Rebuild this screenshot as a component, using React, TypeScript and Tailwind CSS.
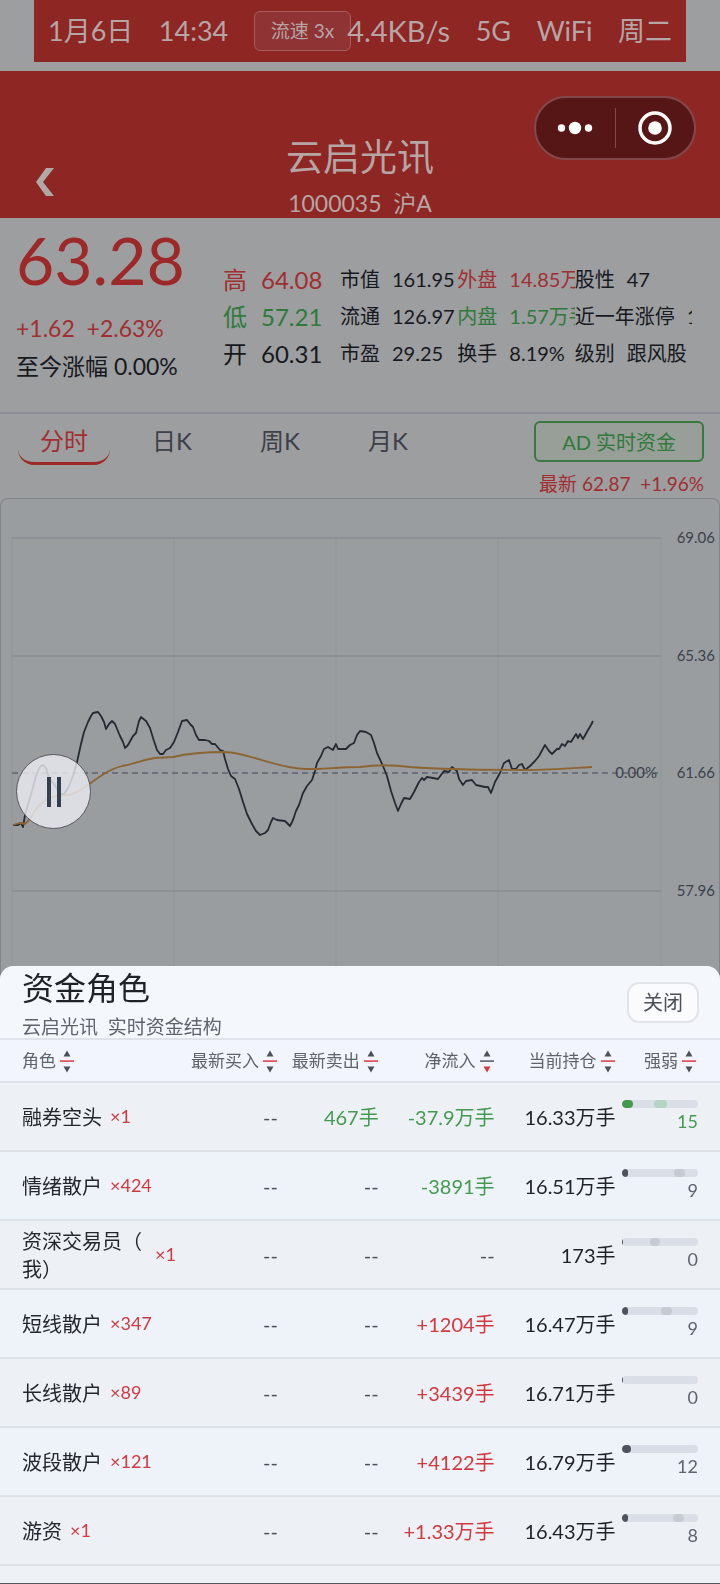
import { useState } from "react";

const FONT = "font-[Lato,'Noto_Sans_CJK_SC',sans-serif]";

const QUOTE = [
  { label: "高", value: "64.08", cls: "text-[#a22e31]" },
  { label: "低", value: "57.21", cls: "text-[#2f7a3a]" },
  { label: "开", value: "60.31", cls: "text-[#17191e]" },
];

const STATS = [
  [
    { label: "市值", value: "161.95", cls: "" },
    { label: "流通", value: "126.97", cls: "" },
    { label: "市盈", value: "29.25", cls: "" },
  ],
  [
    { label: "外盘", value: "14.85万手", cls: "text-[#a22e31]" },
    { label: "内盘", value: "1.57万手", cls: "text-[#2f7a3a]" },
    { label: "换手", value: "8.19%", cls: "" },
  ],
  [
    { label: "股性", value: "47", cls: "" },
    { label: "近一年涨停", value: "1", cls: "" },
    { label: "级别", value: "跟风股", cls: "" },
  ],
];

const TABS = ["分时", "日K", "周K", "月K"];

const COLUMNS = [
  { title: "角色", width: "w-[25%]" },
  { title: "最新买入", width: "w-[13.6%]" },
  { title: "最新卖出", width: "w-[14%]" },
  { title: "净流入", width: "w-[16.1%]" },
  { title: "当前持仓", width: "w-[16.8%]" },
  { title: "强弱", width: "w-[14.5%]" },
];

type Role = {
  name: string;
  count: number;
  buy: string;
  sell: string;
  net: string;
  hold: string;
  power: number;
  ghost?: [number, number];
};

const ROLES: Role[] = [
  { name: "融券空头", count: 1, buy: "--", sell: "467手", net: "-37.9万手", hold: "16.33万手", power: 15, ghost: [43, 17] },
  { name: "情绪散户", count: 424, buy: "--", sell: "--", net: "-3891手", hold: "16.51万手", power: 9, ghost: [68, 15] },
  { name: "资深交易员（我）", count: 1, buy: "--", sell: "--", net: "--", hold: "173手", power: 0, ghost: [37, 13] },
  { name: "短线散户", count: 347, buy: "--", sell: "--", net: "+1204手", hold: "16.47万手", power: 9, ghost: [51, 15] },
  { name: "长线散户", count: 89, buy: "--", sell: "--", net: "+3439手", hold: "16.71万手", power: 0 },
  { name: "波段散户", count: 121, buy: "--", sell: "--", net: "+4122手", hold: "16.79万手", power: 12 },
  { name: "游资", count: 1, buy: "--", sell: "--", net: "+1.33万手", hold: "16.43万手", power: 8, ghost: [67, 15] },
];

const PRICE_LINE =
  "M13 327 L18 327 L21 325 L23 329 L25 317 L30 300 L36 278 L40 269 L43 267 L46 270 L49 280 L54 286 L58 292 L61 296 L64 296 L68 290 L73 278 L77 264 L81 246 L84 234 L88 224 L91 218 L93 215 L98 214 L101 218 L104 224 L106 231 L109 226 L112 223 L115 226 L120 238 L123 244 L125 250 L128 247 L133 238 L136 235 L139 223 L141 219 L146 223 L150 230 L153 240 L157 252 L160 256 L163 256 L166 252 L170 250 L174 244 L178 234 L182 223 L187 222 L190 226 L193 229 L196 237 L199 242 L205 242 L209 243 L212 246 L215 246 L220 252 L223 253 L225 261 L228 271 L231 278 L235 281 L239 291 L243 304 L247 316 L252 326 L256 333 L260 337 L265 335 L268 332 L271 324 L273 320 L277 322 L285 323 L290 328 L293 322 L296 313 L299 307 L303 295 L307 288 L312 282 L315 273 L317 265 L321 258 L324 251 L328 249 L333 252 L336 246 L338 251 L346 251 L350 247 L354 245 L357 237 L360 233 L366 234 L371 237 L374 245 L377 255 L383 268 L387 278 L391 293 L395 305 L398 313 L401 306 L404 300 L410 301 L414 294 L419 284 L422 280 L424 282 L427 279 L433 280 L438 281 L444 273 L449 274 L452 269 L457 273 L459 281 L463 287 L466 283 L472 282 L476 287 L485 289 L488 289 L491 295 L495 284 L500 275 L504 265 L509 262 L512 271 L516 271 L519 267 L522 266 L525 272 L530 268 L535 263 L539 258 L545 247 L549 253 L552 256 L557 251 L559 251 L562 246 L565 248 L568 243 L571 244 L576 236 L578 240 L580 236 L583 241 L588 232 L591 227 L593 223";

const AVG_LINE =
  "M13 327 L20 325 L25 326 L30 321 Q38 306 46 302 C56 296 62 298 70 297 C80 293 86 289 92 284 C102 277 110 271 122 268 C135 266 145 261 155 260 L173 259 C190 255 212 254 225 254 C250 255 275 270 305 271 L318 271 C335 270 348 269 360 269 C380 266 395 267 410 269 C440 271 480 272 525 272 C550 272 575 270 592 269";

const GRID_Y = [
  { y: 40, label: "69.06" },
  { y: 158, label: "65.36" },
  { y: 275, label: "61.66" },
  { y: 393, label: "57.96" },
];

function StatusBar() {
  return (
    <div className="mx-[34px] flex h-[62px] items-center justify-between bg-[#8e2624] px-[14px] text-[27px] whitespace-nowrap text-[#b5a5a5]">
      <span>1月6日</span>
      <span>14:34</span>
      <div className="flex items-center">
        <button
          type="button"
          className="h-10 rounded-md border border-[#a65c5c] bg-[#8f3334] px-4 text-[19px]"
        >
          流速 3x
        </button>
        <span className="-ml-1 text-[29px]">4.4KB/s</span>
      </div>
      <span>5G</span>
      <span>WiFi</span>
      <span>周二</span>
    </div>
  );
}

function Header() {
  return (
    <header className="relative mt-[9px] flex h-[147px] flex-col items-center justify-end bg-[#8e2624] text-[#b5a5a5]">
      <button type="button" aria-label="返回" className="absolute bottom-[18px] left-8 p-1">
        <svg width="18" height="28" viewBox="0 0 18 28" fill="#b0a8a6">
          <path d="M10 0 H18 L7 14 L18 28 H10 L0 14 Z" />
        </svg>
      </button>
      <h1 className="text-[37px] leading-[62px]">云启光讯</h1>
      <p className="text-[23px] leading-[30px] whitespace-pre">1000035  沪A</p>
      <div className="absolute top-[25px] right-6 flex h-16 w-[162px] items-center rounded-full border-2 border-[#83494a] bg-[#561616]">
        <button type="button" aria-label="更多" className="flex flex-1 items-center justify-center">
          <svg width="36" height="14" viewBox="0 0 36 14" fill="#fff">
            <circle cx="4.500" cy="7" r="3.700" />
            <circle cx="18" cy="7" r="6.200" />
            <circle cx="31.500" cy="7" r="3.700" />
          </svg>
        </button>
        <span className="h-10 w-px bg-[#83494a]" />
        <button type="button" aria-label="关闭小程序" className="flex flex-1 items-center justify-center">
          <svg width="34" height="34" viewBox="0 0 34 34">
            <circle cx="17" cy="17" r="15" fill="none" stroke="#fff" strokeWidth="3.500" />
            <circle cx="17" cy="17" r="6.800" fill="#fff" />
          </svg>
        </button>
      </div>
    </header>
  );
}

function QuotePanel() {
  return (
    <section className="flex h-[196px] border-b-2 border-[#8c8e95] pr-7 pl-4 whitespace-nowrap text-[#17191e]">
      <div className="w-[207px] shrink-0">
        <div className="pt-1 text-[66px] leading-[76px] text-[#9c2827]">63.28</div>
        <div className="mt-[11px] text-[23px] leading-[38px] whitespace-pre text-[#a22e31]">+1.62  +2.63%</div>
        <div className="text-[23px] leading-[38px]">至今涨幅 0.00%</div>
      </div>
      <div className="w-[117px] shrink-0 pt-[43px] text-[24px] leading-[37px]">
        {QUOTE.map((q) => (
          <div key={q.label} className={`flex gap-[14px] ${q.cls}`}>
            <span>{q.label}</span>
            <span>{q.value}</span>
          </div>
        ))}
      </div>
      <div className="grid flex-1 grid-cols-3 pt-[43px] text-[20px] leading-[37px]">
        {STATS.map((col, i) => (
          <div key={i} className="min-w-0">
            {col.map((s) => (
              <div key={s.label} className={`flex gap-3 overflow-hidden ${s.cls}`}>
                <span className="shrink-0">{s.label}</span>
                <span>{s.value}</span>
              </div>
            ))}
          </div>
        ))}
      </div>
    </section>
  );
}

function Chart() {
  const [paused, setPaused] = useState(false);

  return (
    <section className="relative overflow-hidden rounded-t-lg border border-b-0 border-[#80858c] bg-[#999da0]">
      <svg viewBox="1 1 718 560" className="block w-full">
        {[12, 174, 336, 498, 661].map((x) => (
          <line key={x} x1={x} x2={x} y1="40" y2="561" stroke="#94989d" strokeWidth="1.500" />
        ))}
        {GRID_Y.map((g) => (
          <g key={g.label}>
            <line
              x1="12"
              x2="661"
              y1={g.y}
              y2={g.y}
              stroke={g.label === "61.66" ? "#5d626e" : "#8a8e95"}
              strokeWidth="1.500"
              strokeDasharray={g.label === "61.66" ? "6 4" : undefined}
            />
            <text x="715" y={g.y + 5} textAnchor="end" fontSize="15" fill="#3d424b">
              {g.label}
            </text>
          </g>
        ))}
        <text x="657" y="280" textAnchor="end" fontSize="15" fill="#3d424b">
          0.00%
        </text>
        <path d={PRICE_LINE} fill="none" stroke="#252b33" strokeWidth="1.800" strokeLinejoin="round" />
        <path d={AVG_LINE} fill="none" stroke="#8d6431" strokeWidth="1.800" />
      </svg>
      <button
        type="button"
        aria-label={paused ? "继续" : "暂停"}
        onClick={() => setPaused(!paused)}
        className="absolute top-[255px] left-[15px] flex size-[75px] items-center justify-center rounded-full border border-[#55585f] bg-[#ecedf4]/80"
      >
        <svg width="14" height="30" viewBox="0 0 14 30" fill="#34404e">
          <rect width="4" height="30" />
          <rect x="10" width="4" height="30" />
        </svg>
      </button>
    </section>
  );
}

function SortIcon({ active }: { active?: boolean }) {
  return (
    <svg width="14" height="24" viewBox="0 0 14 24" className="shrink-0">
      <path d="M7 1.500 L10.500 7.500 H3.500 Z" fill="#4b505b" />
      <rect y="11.300" width="14" height="1.600" fill={active ? "#5b6270" : "#e0444c"} />
      <path d="M7 23.500 L10.500 17.500 H3.500 Z" fill={active ? "#d9363e" : "#4b505b"} />
    </svg>
  );
}

function netColor(v: string) {
  if (v.startsWith("+")) return "text-[#d0393f]";
  if (v === "--") return "text-[#4a4f5a]";
  return "text-[#449a50]";
}

function PowerBar({ role, green }: { role: Role; green: boolean }) {
  return (
    <div className="relative h-2 overflow-hidden rounded-full bg-[#d9dee7]">
      {role.ghost && (
        <span
          className={`absolute inset-y-0 rounded-full ${green ? "bg-[#b5d2c5]" : "bg-[#c6cad1]"}`}
          style={{ left: `${role.ghost[0]}%`, width: `${role.ghost[1]}%` }}
        />
      )}
      <span
        className={`absolute inset-y-0 left-0 min-w-px rounded-full ${green ? "bg-[#46984e]" : "bg-[#4d525d]"}`}
        style={{ width: `${role.power}%` }}
      />
    </div>
  );
}

function RoleSheet({ onClose }: { onClose: () => void }) {
  return (
    <div className="fixed inset-x-0 bottom-0 rounded-t-[14px] border-b border-[#55585f] bg-[#eef2f7] pb-[17px]">
      <div className="flex h-[72px] items-center justify-between rounded-t-[14px] bg-[#f4f7fb] pr-[21px] pl-[22px]">
        <div className="self-start">
          <h2 className="text-[32px] leading-[43px] text-[#1f2227]">资金角色</h2>
          <p className="text-[19px] leading-[35px] whitespace-pre text-[#5e636e]">云启光讯  实时资金结构</p>
        </div>
        <button
          type="button"
          onClick={onClose}
          className="h-[41px] rounded-xl border-2 border-[#e1e4ea] bg-[#f9fbfe] px-[14px] text-[20px] leading-none text-[#4a4f5a]"
        >
          关闭
        </button>
      </div>
      <table className="w-full table-fixed border-collapse whitespace-nowrap">
        <thead>
          <tr className="h-[43px] border-y-2 border-[#dee2ea] bg-[#f2f5fd] text-[17px] text-[#5e636e]">
            {COLUMNS.map((c, i) => (
              <th
                key={c.title}
                className={`p-0 font-normal ${c.width} ${i === 0 ? "pl-[22px]" : i === 5 ? "pr-6" : "pr-px"}`}
              >
                <button
                  type="button"
                  className={`flex w-full items-center gap-1 leading-6 ${i === 0 ? "justify-start" : "justify-end"}`}
                >
                  {c.title}
                  <SortIcon active={c.title === "净流入"} />
                </button>
              </th>
            ))}
          </tr>
        </thead>
        <tbody>
          {ROLES.map((r) => {
            const green = r.power >= 15;
            return (
              <tr
                key={r.name}
                className="h-[69px] border-b-2 border-[#dde1e8] text-right text-[20px] odd:bg-[#edf1f6] even:bg-[#eef2f9]"
              >
                <td className="p-0 pr-1 pl-[22px] text-left">
                  <div className="flex items-center gap-2">
                    <span className="leading-7 whitespace-normal text-[#24272d] [line-break:anywhere]">{r.name}</span>
                    <span className="shrink-0 text-[18px] text-[#d0393f]">×{r.count}</span>
                  </div>
                </td>
                <td className="p-0 text-[#4a4f5a]">{r.buy}</td>
                <td className={`p-0 ${r.sell === "--" ? "text-[#4a4f5a]" : "text-[#449a50]"}`}>{r.sell}</td>
                <td className={`p-0 ${netColor(r.net)}`}>{r.net}</td>
                <td className="p-0 text-[#1f2227]">{r.hold}</td>
                <td className="p-0 pr-[22px] pl-[6px]">
                  <PowerBar role={r} green={green} />
                  <div className={`text-[18px] leading-[26px] ${green ? "text-[#449a50]" : "text-[#5e636e]"}`}>
                    {r.power}
                  </div>
                </td>
              </tr>
            );
          })}
        </tbody>
      </table>
    </div>
  );
}

export default function App() {
  const [tab, setTab] = useState("分时");
  const [open, setOpen] = useState(true);

  return (
    <div className={`min-h-screen bg-[#9c9ea0] ${FONT}`}>
      <StatusBar />
      <Header />
      <QuotePanel />
      <div className="flex h-[84px] items-start justify-between pt-[7px] pr-4 pl-[18px]">
        <nav className="flex gap-4">
          {TABS.map((t) => (
            <button
              key={t}
              type="button"
              onClick={() => setTab(t)}
              className={`h-11 w-[92px] rounded-2xl border-b-[3px] pb-0.5 text-[24px] ${
                t === tab ? "border-[#9c2827] text-[#a22e31]" : "border-transparent text-[#3c4048]"
              }`}
            >
              {t}
            </button>
          ))}
        </nav>
        <div className="flex flex-col items-end">
          <button
            type="button"
            onClick={() => setOpen(true)}
            className="h-[41px] rounded-md border-2 border-[#39783f] bg-[#979f98] px-[26px] text-[20px] leading-none text-[#2f7a3a]"
          >
            AD 实时资金
          </button>
          <p className="text-[19px] leading-[44px] whitespace-pre text-[#a22e31]">最新 62.87  +1.96%</p>
        </div>
      </div>
      <Chart />
      {open && <RoleSheet onClose={() => setOpen(false)} />}
    </div>
  );
}
